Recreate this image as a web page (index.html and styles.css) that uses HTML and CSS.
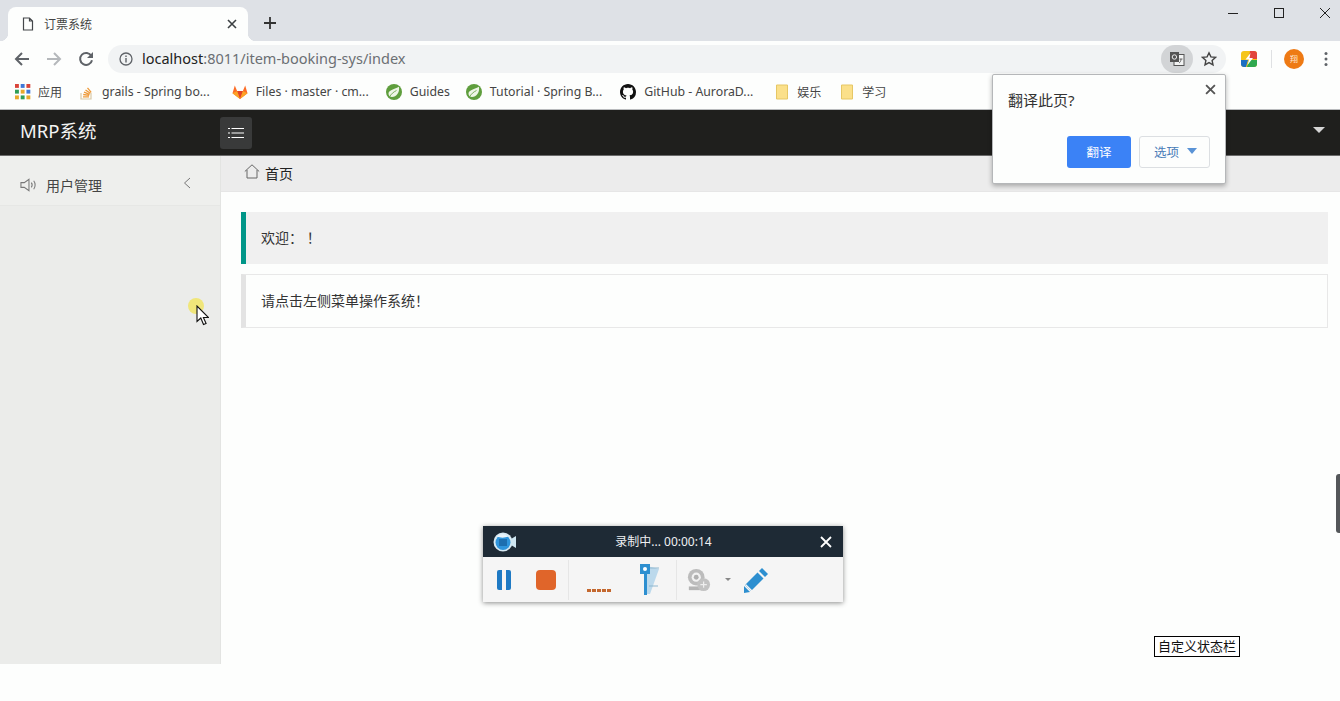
FILE: index.html
```html
<!DOCTYPE html>
<html lang="zh">
<head>
<meta charset="utf-8">
<title>订票系统</title>
<link rel="stylesheet" href="styles.css">
</head>
<body>
<div class="browser">
  <div class="tabstrip">
    <div class="tab">
      <svg class="tab-doc" viewBox="0 0 12 14"><path d="M1.500 1h6l3 3v9h-9z M7.500 1v3h3" fill="none" stroke="#44474a" stroke-width="1.200"/></svg>
      <span class="tab-title">订票系统</span>
      <svg class="tab-close" viewBox="0 0 10 10"><path d="M1 1l8 8M9 1l-8 8" stroke="#3c4043" stroke-width="1.600"/></svg>
    </div>
    <svg class="new-tab" viewBox="0 0 12 12"><path d="M6 0v12M0 6h12" stroke="#333" stroke-width="1.800"/></svg>
    <div class="win-controls">
      <svg class="win-icon" viewBox="0 0 12 12"><path d="M1 6.500h10" stroke="#222" stroke-width="1"/></svg>
      <svg class="win-icon" viewBox="0 0 12 12"><rect x="1.500" y="1.500" width="9" height="9" fill="none" stroke="#222" stroke-width="1"/></svg>
      <svg class="win-icon" viewBox="0 0 12 12"><path d="M1 1l10 10M11 1L1 11" stroke="#222" stroke-width="1"/></svg>
    </div>
  </div>

  <div class="toolbar">
    <svg class="nav-icon" viewBox="0 0 16 16"><path d="M15 8H2M8 2L2 8l6 6" fill="none" stroke="#5f6368" stroke-width="2"/></svg>
    <svg class="nav-icon" viewBox="0 0 16 16"><path d="M1 8h13M8 2l6 6-6 6" fill="none" stroke="#b5b8bb" stroke-width="2"/></svg>
    <svg class="nav-icon" viewBox="0 0 16 16"><path d="M13.400 5A6 6 0 1 0 14 9.200" fill="none" stroke="#5f6368" stroke-width="2"/><path d="M15 1v6H9z" fill="#5f6368"/></svg>
    <div class="omnibox">
      <svg class="info-icon" viewBox="0 0 14 14"><circle cx="7" cy="7" r="6" fill="none" stroke="#5f6368" stroke-width="1.300"/><path d="M7 6v4.400M7 3.400v1.500" stroke="#5f6368" stroke-width="1.400"/></svg>
      <span class="url"><span class="url-host">localhost</span>:8011/item-booking-sys/index</span>
      <span class="translate-pill">
        <svg class="translate-icon" viewBox="0 0 16 16"><rect x="5" y="3.500" width="10" height="11" fill="#f2f3f3" stroke="#555" stroke-width="1"/><rect x="1" y="1" width="9" height="10" fill="#555"/><circle cx="5.400" cy="6" r="2.200" fill="none" stroke="#eee" stroke-width="1"/><path d="M10.500 8h3M12 8c0 2-1 3.500-2 4" fill="none" stroke="#555" stroke-width=".9"/></svg>
      </span>
      <svg class="star-icon" viewBox="0 0 16 16"><path d="M8 1.800l1.900 4.100 4.500.5-3.300 3 .9 4.500L8 11.600l-4 2.300.9-4.500-3.300-3 4.500-.5z" fill="none" stroke="#444" stroke-width="1.400"/></svg>
    </div>
    <svg class="ext-icon" viewBox="0 0 16 16"><rect width="16" height="16" rx="3" fill="#f5c518"/><path d="M9 0h4a3 3 0 0 1 3 3v5H8z" fill="#e2453c"/><path d="M0 9h7l-2 7H3a3 3 0 0 1-3-3z" fill="#1b6fc2"/><path d="M8 9h8v4a3 3 0 0 1-3 3H6z" fill="#2fa84f"/><path d="M9.500 2L4.500 8.500h3.500L6.500 14l5.500-7H8.500z" fill="#fff"/></svg>
    <span class="tool-sep"></span>
    <span class="avatar">翔</span>
    <svg class="menu-icon" viewBox="0 0 4 16"><circle cx="2" cy="2.500" r="1.500" fill="#5f6368"/><circle cx="2" cy="8" r="1.500" fill="#5f6368"/><circle cx="2" cy="13.500" r="1.500" fill="#5f6368"/></svg>
  </div>

  <div class="bookmarks">
    <a class="bm bm-cjk">
      <svg class="bm-icon" viewBox="0 0 14 14"><g><rect x="0" y="0" width="3.400" height="3.400" fill="#d9453a"/><rect x="5" y="0" width="3.400" height="3.400" fill="#3f78d8"/><rect x="10" y="0" width="3.400" height="3.400" fill="#d9453a"/><rect x="0" y="5" width="3.400" height="3.400" fill="#2f9e57"/><rect x="5" y="5" width="3.400" height="3.400" fill="#e8a92c"/><rect x="10" y="5" width="3.400" height="3.400" fill="#3f78d8"/><rect x="0" y="10" width="3.400" height="3.400" fill="#e8a92c"/><rect x="5" y="10" width="3.400" height="3.400" fill="#2f9e57"/><rect x="10" y="10" width="3.400" height="3.400" fill="#e8a92c"/></g></svg>
      应用
    </a>
    <a class="bm">
      <svg class="bm-icon" viewBox="0 0 16 16"><path d="M3 9v6h10V9" fill="none" stroke="#d9c9a8" stroke-width="1.200"/><path d="M5 12.800h6M5.200 10.500l6 .8M6 8.200l5.600 2.100M7.500 6l4.800 3.300M9.500 3.800l3.700 4.500" fill="none" stroke="#ee9a3a" stroke-width="1.300"/></svg>
      grails - Spring bo...
    </a>
    <a class="bm">
      <svg class="bm-icon" viewBox="0 0 16 16"><path d="M8 15L0.500 9.300 2.800 1.500l2.300 5.500h5.800l2.300-5.500 2.300 7.800z" fill="#fc6d26"/><path d="M8 15L5.100 7h5.800z" fill="#e24329"/><path d="M8 15L0.500 9.300 5.100 7zM8 15l7.500-5.700L10.900 7z" fill="#fca326"/></svg>
      Files · master · cm...
    </a>
    <a class="bm">
      <svg class="bm-icon" viewBox="0 0 16 16"><circle cx="8" cy="8" r="8" fill="#5f9e3d"/><path d="M13 2.800c.8 6-2.500 10.200-7 10.200-2 0-3.500-1.300-3.500-3.300 0-3.700 5-3.900 10.500-6.900z" fill="#eef5e6"/><path d="M3.500 13c1.500-3 4-5 7-6.500" fill="none" stroke="#5f9e3d" stroke-width=".8"/></svg>
      Guides
    </a>
    <a class="bm">
      <svg class="bm-icon" viewBox="0 0 16 16"><circle cx="8" cy="8" r="8" fill="#5f9e3d"/><path d="M13 2.800c.8 6-2.500 10.200-7 10.200-2 0-3.500-1.300-3.500-3.300 0-3.700 5-3.900 10.500-6.900z" fill="#eef5e6"/><path d="M3.500 13c1.500-3 4-5 7-6.500" fill="none" stroke="#5f9e3d" stroke-width=".8"/></svg>
      Tutorial · Spring B...
    </a>
    <a class="bm">
      <svg class="bm-icon" viewBox="0 0 16 16"><path fill="#111" d="M8 0C3.580 0 0 3.580 0 8c0 3.540 2.290 6.530 5.470 7.590.4.070.55-.17.55-.38 0-.19-.01-.82-.01-1.490-2.010.37-2.530-.49-2.690-.94-.09-.23-.48-.94-.82-1.130-.28-.15-.68-.52-.01-.53.63-.01 1.080.58 1.230.82.72 1.210 1.870.87 2.330.66.070-.52.28-.87.51-1.070-1.780-.2-3.640-.89-3.640-3.950 0-.87.31-1.590.82-2.150-.08-.2-.36-1.020.08-2.120 0 0 .67-.21 2.200.82.64-.18 1.320-.27 2-.27.68 0 1.360.09 2 .27 1.530-1.040 2.200-.82 2.200-.82.44 1.100.16 1.920.08 2.120.51.56.82 1.270.82 2.150 0 3.070-1.870 3.750-3.650 3.950.29.25.54.73.54 1.480 0 1.070-.01 1.930-.01 2.200 0 .21.15.46.55.38A8.013 8.013 0 0016 8c0-4.420-3.580-8-8-8z"/></svg>
      GitHub - AuroraD...
    </a>
    <a class="bm bm-cjk">
      <svg class="bm-icon" viewBox="0 0 16 16"><path d="M2.500 1h11v14h-11z" fill="#fbe08a" stroke="#e6c765" stroke-width="1"/></svg>
      娱乐
    </a>
    <a class="bm bm-cjk">
      <svg class="bm-icon" viewBox="0 0 16 16"><path d="M2.500 1h11v14h-11z" fill="#fbe08a" stroke="#e6c765" stroke-width="1"/></svg>
      学习
    </a>
  </div>
</div>

<div class="app">
  <header class="app-header">
    <div class="brand">MRP系统</div>
    <button class="menu-toggle">
      <svg class="toggle-icon" viewBox="0 0 16 10"><path d="M3.500 .5h12.500M3.500 5h12.500M3.500 9.500h12.500M0 .5h2M0 5h2M0 9.500h2" stroke="#fff" stroke-width="1.200"/></svg>
    </button>
    <span class="user-caret"></span>
  </header>
  <div class="app-body">
    <aside class="sidebar">
      <div class="side-item">
        <svg class="side-icon" viewBox="0 0 18 14"><path d="M1 4.500h3.500L9.500 1v12L4.500 9.500H1z" fill="none" stroke="#777" stroke-width="1.100"/><path d="M12 4.500c1 1.400 1 3.600 0 5M14.500 2.500c2 2.500 2 6.500 0 9" fill="none" stroke="#777" stroke-width="1.100"/></svg>
        <span class="side-label">用户管理</span>
        <svg class="side-arrow" viewBox="0 0 8 12"><path d="M7 1L1.500 6 7 11" fill="none" stroke="#777" stroke-width="1"/></svg>
      </div>
    </aside>
    <main class="content">
      <nav class="crumbs">
        <svg class="home-icon" viewBox="0 0 16 15"><path d="M.8 7.500L8 .8l7.200 6.700M3 6v8h10V6" fill="none" stroke="#666" stroke-width="1"/></svg>
        <span>首页</span>
      </nav>
      <div class="panel">
        <div class="quote quote-primary">欢迎：&nbsp;！</div>
        <div class="quote quote-plain">请点击左侧菜单操作系统！</div>
      </div>
    </main>
  </div>
</div>

<div class="translate-popup">
  <div class="popup-title">翻译此页?</div>
  <svg class="popup-close" viewBox="0 0 10 10"><path d="M1 1l8 8M9 1l-8 8" stroke="#555" stroke-width="1.700"/></svg>
  <div class="popup-actions">
    <button class="btn-translate">翻译</button>
    <button class="btn-options">选项<span class="options-caret"></span></button>
  </div>
</div>

<div class="recorder">
  <div class="rec-head">
    <svg class="rec-logo" viewBox="0 0 24 20"><circle cx="10" cy="10" r="9.500" fill="#d7e9f3"/><circle cx="10" cy="10.500" r="7.500" fill="#2f95dc"/><path d="M4 4.500c3-3 8-3 11 0-3 1.500-8 1.500-11 0z" fill="#eaf4fa"/><path d="M6 7h8v7H6z" fill="#1d6fb0"/><path d="M18 7l5-3v12l-5-3z" fill="#cfe6f2"/></svg>
    <span class="rec-title">录制中... 00:00:14</span>
    <svg class="rec-close" viewBox="0 0 12 12"><path d="M1 1l10 10M11 1L1 11" stroke="#fff" stroke-width="1.800"/></svg>
  </div>
  <div class="rec-tools">
    <span class="rec-pause"></span>
    <span class="rec-stop"></span>
    <span class="rec-sep"></span>
    <span class="rec-level"></span>
    <svg class="rec-pen" viewBox="0 0 24 32"><path d="M12 2l12 3-9 25h-3z" fill="#bcd9ec"/><path d="M14 4h10M14 22h9" stroke="#8fb7cf" stroke-width="1"/><rect x="5" y="0" width="10" height="10" fill="#2d8fd0"/><circle cx="10" cy="5" r="2" fill="#fff"/><rect x="9" y="10" width="3" height="21" fill="#2d8fd0"/></svg>
    <span class="rec-sep"></span>
    <svg class="rec-cam" viewBox="0 0 26 26"><circle cx="10" cy="10" r="9" fill="#bcbcbc"/><circle cx="10" cy="10" r="5" fill="#f2f2f2"/><circle cx="10" cy="10" r="2.600" fill="#b0b0b0"/><path d="M2 20h14v4H2z" fill="#b5b5b5"/><circle cx="18" cy="18" r="7" fill="#c2c2c2"/><path d="M18 14.500v7M14.500 18h7" stroke="#eee" stroke-width="1.300"/></svg>
    <span class="rec-drop"></span>
    <svg class="rec-edit" viewBox="0 0 26 26"><path d="M19 1l6 6-3 3-6-6z" fill="#2d8fd0"/><path d="M15 5l6 6L8 24l-6-6z" fill="#2d8fd0"/><path d="M1 19l6 6-6 1z" fill="#2d8fd0"/><path d="M14 4l8 8" stroke="#f5f5f5" stroke-width="1.300"/><path d="M2.500 17.500l6.500 6.500" stroke="#f5f5f5" stroke-width="1.300"/></svg>
  </div>
</div>

<div class="status-tag">自定义状态栏</div>
<div class="edge-handle"></div>
<div class="cursor-glow"></div>
<svg class="cursor" viewBox="0 0 13 21"><path d="M1 1v15.500l3.800-3.500 2.700 6.500 2.600-1.100L7.400 12.500H12.500z" fill="#fff" stroke="#111" stroke-width="1.100"/></svg>
</body>
</html>
```

FILE: styles.css
```css
* { box-sizing: border-box; }
html, body { margin: 0; padding: 0; }
body {
  position: relative;
  width: 1340px;
  height: 701px;
  overflow: hidden;
  background: #fdfefd;
  color: #333;
  font-family: "Noto Sans", "Noto Sans CJK SC", sans-serif;
}
svg { display: block; flex: none; }

/* browser chrome */
.browser { border-bottom: 1px solid #b9bbbd; }
.tabstrip {
  height: 41px;
  background: #dee1e6;
  padding: 7px 9px 0 8px;
  display: flex;
  align-items: flex-start;
}
.tab {
  position: relative;
  width: 240px;
  height: 34px;
  background: #fdfefd;
  border-radius: 8px 8px 0 0;
  display: flex;
  align-items: center;
  padding: 0 11px 0 14px;
}
.tab::before, .tab::after {
  content: "";
  position: absolute;
  bottom: 0;
  width: 8px;
  height: 8px;
}
.tab::before { left: -8px; background: radial-gradient(circle at 0 0, transparent 8px, #fdfefd 8.500px); }
.tab::after { right: -8px; background: radial-gradient(circle at 100% 0, transparent 8px, #fdfefd 8.500px); }
.tab-doc { width: 12px; height: 14px; }
.tab-title { margin-left: 10px; font-size: 12px; color: #444; flex: 1; }
.tab-close { width: 10px; height: 10px; }
.new-tab { width: 12px; height: 12px; margin: 10px 0 0 16px; }
.win-controls { margin-left: auto; display: flex; gap: 34px; }
.win-icon { width: 12px; height: 12px; }

.toolbar {
  height: 35px;
  background: #fdfefd;
  display: flex;
  align-items: center;
  padding-left: 14px;
}
.nav-icon { width: 16px; height: 16px; margin-right: 16px; }
.omnibox {
  margin-left: -2px;
  width: 1118px;
  height: 28px;
  border-radius: 14px;
  background: #f1f3f4;
  display: flex;
  align-items: center;
  padding-left: 11px;
}
.info-icon { width: 14px; height: 14px; }
.url { margin: -2px 0 0 9px; font-size: 14.500px; color: #6b6f73; flex: 1; white-space: nowrap; }
.url-host { color: #222; }
.translate-pill {
  width: 32px;
  height: 28px;
  border-radius: 14px;
  background: #d2d4d6;
  display: flex;
  align-items: center;
  justify-content: center;
}
.translate-icon { width: 16px; height: 16px; }
.star-icon { width: 16px; height: 16px; margin: 0 9px 0 8px; }
.ext-icon { width: 16px; height: 16px; margin-left: 15px; }
.tool-sep { width: 1px; height: 18px; background: #dfe1e3; margin-left: 14px; }
.avatar {
  width: 20px;
  height: 20px;
  margin-left: 12px;
  border-radius: 50%;
  background: #ee7a14;
  color: #ffe9d2;
  font-size: 8px;
  display: flex;
  align-items: center;
  justify-content: center;
}
.menu-icon { width: 4px; height: 16px; margin-left: 20px; }

.bookmarks {
  height: 33px;
  background: #fdfefd;
  display: flex;
  align-items: center;
  padding: 0 0 2px 15px;
  gap: 18px;
  font-size: 12.300px;
  color: #444;
}
.bm { display: flex; align-items: center; gap: 8px; white-space: nowrap; }
.bm-cjk { gap: 7px; font-size: 12px; }
.bm-icon { width: 16px; height: 16px; }
.bm:nth-child(1) { margin-right: -2px; }
.bm:nth-child(2) { margin-right: 4px; }
.bm:nth-child(3) { margin-right: -1px; }
.bm:nth-child(4) { margin-right: -2px; }
.bm:nth-child(6) { margin-right: 3px; }

/* application */
.app { display: flex; flex-direction: column; }
.app-header {
  height: 46px;
  background: #1f1f1d;
  border-bottom: 1px solid #6a6a6a;
  display: flex;
  align-items: center;
  padding-left: 20px;
  padding-right: 15px;
}
.brand { width: 200px; color: #f4f4f4; font-size: 18.500px; margin-top: -6px; }
.menu-toggle {
  width: 32px;
  height: 32px;
  padding: 0;
  border: 0;
  border-radius: 3px;
  background: #393a3a;
  display: flex;
  align-items: center;
  justify-content: center;
  margin-top: 1px;
}
.toggle-icon { width: 16px; height: 10px; }
.user-caret {
  margin-left: auto;
  margin-top: -6px;
  width: 0;
  height: 0;
  border-left: 6px solid transparent;
  border-right: 6px solid transparent;
  border-top: 6px solid #d5d5d5;
}
.app-body { display: flex; height: 508px; }
.sidebar {
  width: 221px;
  background: #ebecea;
  border-right: 1px solid #e3e4e2;
  flex: none;
}
.side-item {
  height: 50px;
  background: #eeefed;
  border-bottom: 1px solid #e6e7e5;
  display: flex;
  align-items: center;
  padding: 9px 29px 0 20px;
}
.side-icon { width: 17px; height: 14px; }
.side-label { margin-left: 9px; flex: 1; font-size: 14px; color: #444; }
.side-arrow { width: 8px; height: 12px; margin-top: -5px; }
.content { flex: 1; background: #fdfefd; min-width: 0; }
.crumbs {
  height: 36px;
  background: #ececec;
  border-bottom: 1px solid #e6e6e6;
  display: flex;
  align-items: center;
  padding: 0 0 2px 23px;
  gap: 5px;
  font-size: 14px;
  color: #222;
}
.home-icon { width: 16px; height: 15px; margin-top: -3px; }
.panel { padding: 20px 12px 0 20px; display: flex; flex-direction: column; gap: 10px; }
.quote {
  border-left: 5px solid #009688;
  padding: 0 0 3px 15px;
  font-size: 14px;
  color: #333;
  display: flex;
  align-items: center;
}
.quote-primary { height: 52px; background: #f0f0f0; }
.quote-plain {
  height: 54px;
  background: #fdfefd;
  border: 1px solid #e8e8e8;
  border-left: 5px solid #e3e3e3;
}

/* overlays */
.translate-popup {
  position: absolute;
  left: 992px;
  top: 74px;
  width: 234px;
  height: 110px;
  background: #fdfefd;
  border: 1px solid #b5b7b9;
  border-radius: 2px;
  box-shadow: 0 2px 5px rgba(0, 0, 0, .3);
  padding: 14px 15px 0;
}
.popup-title { font-size: 15px; color: #333; line-height: 22px; }
.popup-close { position: absolute; right: 9px; top: 9px; width: 11px; height: 11px; }
.popup-actions { display: flex; justify-content: flex-end; gap: 8px; margin-top: 25px; }
.btn-translate, .btn-options {
  height: 32px;
  padding: 0 0 2px;
  border-radius: 3px;
  font: 12.500px "Noto Sans CJK SC", sans-serif;
  display: flex;
  align-items: center;
  justify-content: center;
}
.btn-translate { width: 64px; border: 0; background: #3b82f6; color: #fff; }
.btn-options { width: 71px; background: #fdfefd; border: 1px solid #dcdfe2; color: #4a7db8; gap: 8px; padding-left: 2px; }
.options-caret {
  width: 0;
  height: 0;
  border-left: 5px solid transparent;
  border-right: 5px solid transparent;
  border-top: 6px solid #5a93d6;
}

.recorder {
  position: absolute;
  left: 483px;
  top: 526px;
  width: 360px;
  height: 76px;
  background: #f5f5f5;
  box-shadow: 0 1px 5px rgba(0, 0, 0, .45);
}
.rec-head {
  height: 31px;
  background: #1e2a35;
  display: flex;
  align-items: center;
  padding: 0 10px;
}
.rec-logo { width: 24px; height: 20px; }
.rec-title { flex: 1; text-align: center; color: #eef0f2; font-size: 12px; margin: -2px 0 0 -10px; }
.rec-close { width: 12px; height: 12px; margin-right: 1px; }
.rec-tools { height: 45px; display: flex; align-items: center; padding-left: 14px; }
.rec-pause {
  width: 14px;
  height: 20px;
  border-left: 5px solid #1f7ac4;
  border-right: 5px solid #1f7ac4;
  border-radius: 2px;
}
.rec-stop { width: 20px; height: 20px; margin-left: 25px; border-radius: 4px; background: #e0652a; }
.rec-sep { width: 1px; height: 40px; background: #e6e6e6; }
.rec-stop + .rec-sep { margin-left: 12px; }
.rec-level {
  width: 24px;
  height: 3px;
  margin: 22px 0 0 18px;
  background: repeating-linear-gradient(90deg, #c4682f 0 4px, transparent 4px 5px);
}
.rec-pen { width: 24px; height: 32px; margin: 0 17px 0 24px; }
.rec-cam { width: 24px; height: 24px; margin-left: 10px; }
.rec-drop {
  width: 0;
  height: 0;
  margin-left: 14px;
  border-left: 3px solid transparent;
  border-right: 3px solid transparent;
  border-top: 3px solid #888;
}
.rec-edit { width: 26px; height: 26px; margin-left: 12px; }

.status-tag {
  position: absolute;
  left: 1154px;
  top: 636px;
  width: 86px;
  height: 21px;
  border: 1px solid #000;
  background: #fff;
  color: #111;
  font: 13px/18px "Noto Sans CJK SC", sans-serif;
  text-align: center;
}
.edge-handle {
  position: absolute;
  right: 0;
  top: 474px;
  width: 4px;
  height: 59px;
  background: #54575a;
  border-radius: 3px 0 0 3px;
}
.cursor-glow {
  position: absolute;
  left: 188px;
  top: 298px;
  width: 16px;
  height: 16px;
  border-radius: 50%;
  background: #f0e67a;
}
.cursor {
  position: absolute;
  left: 196px;
  top: 305px;
  width: 13px;
  height: 21px;
}
```
